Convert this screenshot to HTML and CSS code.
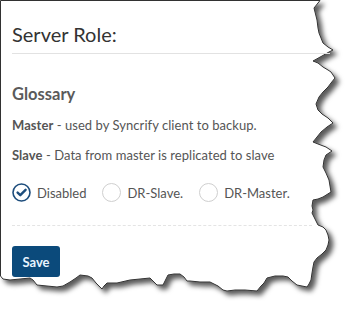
FILE: index.html
```html
<!DOCTYPE html>
<html>
<head>
<meta charset="utf-8">
<link rel="stylesheet" href="styles.css">
</head>
<body>
<div class="sheet">
  <svg class="paper" width="356" height="317" viewBox="0 0 356 317" aria-hidden="true">
    <defs>
      <filter id="shadow" x="-10%" y="-10%" width="130%" height="130%">
        <feDropShadow dx="4" dy="4" stdDeviation="2.5" flood-color="#000" flood-opacity="0.65"/>
      </filter>
    </defs>
    <polygon filter="url(#shadow)" fill="#fff" stroke="#333" stroke-width="1"
      points="0.5,0.5 320,0.5 318,3 314,8 315,12 317,20 318,28 319,33 321,38 323,43 328,47 333,50 329,52 322,56 313,61 318,63 323,67 328,70 331,72 335,78 331,83 328,87 323,92 319,97 316,104 318,110 322,114 328,118 333,123 327,127 321,132 317,137 313,142 318,144 326,147 332,151 326,155 324,160 323,167 326,173 329,180 330,186 331,192 323,197 318,199 313,200 312,206 313,210 312,213 315,219 318,225 323,227 326,230 328,235 329,240 328,245 326,250 322,254 317,258 314,262 313,267 312,273 311,280 309,284 307,287 302,286 297,285 292,281 288,277 283,276 275,276 267,278 264,283 261,286 257,291 245,290 235,290 227,291 223,290 218,286 214,284 210,282 200,282 190,281 187,281 184,277 180,274 174,274 168,275 166,279 163,285 157,285 153,281 150,278 140,279 130,280 117,283 107,283 104,286 102,289 96,283 92,278 88,276 80,275 76,278 70,282 63,286 57,287 47,286 37,285 33,280 30,278 20,279 10,280 3,279 0.5,276"/>
  </svg>
  <div class="content">
    <h1 class="title">Server Role:</h1>
    <h2 class="glossary">Glossary</h2>
    <p class="def"><b>Master</b> - used by Syncrify client to backup.</p>
    <p class="def"><b>Slave</b> - Data from master is replicated to slave</p>
    <div class="radios">
      <label class="radio">
        <span class="dot checked">
          <svg width="19" height="19" viewBox="0 0 19 19"><circle cx="9.5" cy="9.5" r="8.5" fill="none" stroke="#1d4d7c" stroke-width="1.6"/><path d="M5.6 9.6 L8.3 12.2 L13.6 6.8" fill="none" stroke="#1d4d7c" stroke-width="2.4" stroke-linecap="round" stroke-linejoin="round"/></svg>
        </span>
        <span class="label">Disabled</span>
      </label>
      <label class="radio">
        <span class="dot"></span>
        <span class="label">DR-Slave.</span>
      </label>
      <label class="radio">
        <span class="dot"></span>
        <span class="label">DR-Master.</span>
      </label>
    </div>
    <div class="actions">
      <button class="save">Save</button>
    </div>
  </div>
</div>
</body>
</html>
```
FILE: styles.css
```css
html, body {
  margin: 0;
  padding: 0;
  background: #fff;
}
.sheet {
  position: relative;
  width: 356px;
  height: 317px;
  overflow: hidden;
  font-family: "Lato", "Noto Sans", sans-serif;
}
.paper {
  position: absolute;
  left: 0;
  top: 0;
}
.content {
  position: relative;
  padding: 24px 0 0 12px;
  width: 300px;
}
.title {
  margin: 0;
  font-size: 20px;
  font-weight: 400;
  color: #333;
  line-height: 20px;
  width: 318px;
  padding-bottom: 9px;
  border-bottom: 1px solid #e2e2e2;
}
.glossary {
  margin: 30px 0 0 0;
  font-size: 16.5px;
  font-weight: 700;
  color: #5a5a5a;
  line-height: 20px;
}
.def {
  margin: 12px 0 0 0;
  font-size: 13px;
  line-height: 18px;
  color: #555;
  letter-spacing: 0.05px;
}
.def + .def {
  margin-top: 12px;
}
.def b {
  font-weight: 700;
}
.radios {
  display: flex;
  gap: 16px;
  margin-top: 19px;
  padding-bottom: 23px;
  border-bottom: 1px dashed #e4e4e4;
}
.radio {
  display: flex;
  align-items: center;
  gap: 6px;
  font-size: 13px;
  color: #555;
}
.dot {
  width: 17px;
  height: 17px;
  border: 1px solid #cfcfcf;
  border-radius: 50%;
  display: block;
}
.dot.checked {
  width: 19px;
  height: 19px;
  border: none;
}
.dot svg {
  display: block;
}
.actions {
  padding-top: 20px;
}
.save {
  background: #0b4a7b;
  color: #e8f4ff;
  border: none;
  border-radius: 3px;
  width: 48px;
  height: 31px;
  font-family: "Lato", "Noto Sans", sans-serif;
  font-size: 13px;
  font-weight: 700;
  padding: 0;
}
```
